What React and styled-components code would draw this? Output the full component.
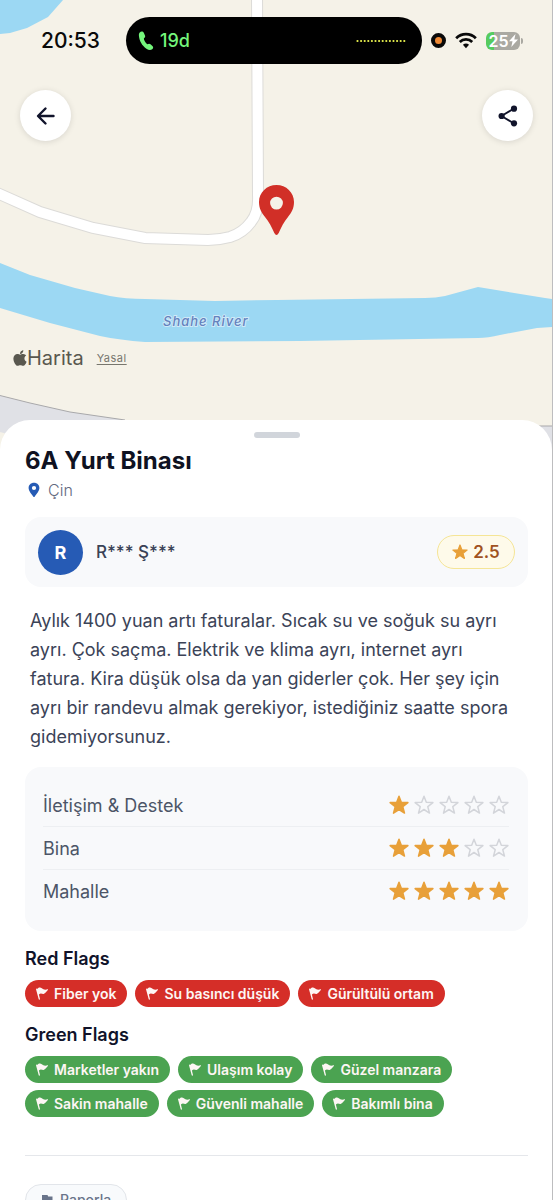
import React from 'react';
import styled, { createGlobalStyle } from 'styled-components';
import { FaApple } from 'react-icons/fa';

const GlobalStyle = createGlobalStyle`
  * { box-sizing: border-box; }
  body { margin: 0; background: #fff; }
  body, button { font-family: Inter, "Noto Sans", "Liberation Sans", sans-serif; }
  h1, h2, p, ul { margin: 0; padding: 0; }
`;

const Screen = styled.div`
  height: 100vh;
  overflow: hidden auto;
  scrollbar-width: none;
  border-right: 1px solid #bdbdbf;
  background: #fff;
`;

const Hero = styled.header`
  position: relative;
  height: 450px;
  display: flex;
  flex-direction: column;
  background: #f5f2e8;
`;

const MapArt = styled.svg`
  position: absolute;
  inset: 0;
  width: 100%;
  height: 100%;
`;

const RiverLabel = styled.text`
  font: italic 500 13px Inter, "Liberation Sans", sans-serif;
  letter-spacing: 1px;
  fill: #6482bd;
  stroke: #cfe9f8;
  stroke-width: 2px;
  paint-order: stroke;
`;

const StatusBar = styled.div`
  position: relative;
  display: flex;
  align-items: center;
  margin-top: 17px;
  padding: 0 29px 0 41px;
`;

const Clock = styled.time`
  width: 85px;
  font-size: 21px;
  line-height: 24px;
  font-weight: 500;
  color: #0a0a0a;
`;

const Island = styled.div`
  flex: 1;
  height: 47px;
  display: flex;
  align-items: center;
  gap: 6px;
  padding: 0 16px 0 12px;
  border-radius: 24px;
  background: #000;
`;

const CallTime = styled.span`
  flex: 1;
  font-size: 18px;
  line-height: 24px;
  font-weight: 500;
  color: #74f67c;
`;

const Indicators = styled.div`
  display: flex;
  align-items: center;
  gap: 9px;
  margin-left: 9px;
`;

const MicDot = styled.span`
  width: 15px;
  height: 15px;
  border: 4px solid #0a0a0a;
  border-radius: 50%;
  background: #f08a35;
`;

const Battery = styled.span`
  display: flex;
  align-items: center;
  gap: 1px;
`;

const BatteryBody = styled.span`
  display: flex;
  align-items: center;
  justify-content: center;
  width: 34px;
  height: 18px;
  border-radius: 6px;
  background: linear-gradient(90deg, #56cb5f 25%, #aaa9a2 25%);
  color: #fff;
  font-size: 16px;
  line-height: 18px;
  font-weight: 600;
`;

const BatteryCap = styled.span`
  width: 2px;
  height: 6px;
  border-radius: 0 2px 2px 0;
  background: #aaa9a2;
`;

const MapNav = styled.nav`
  position: relative;
  display: flex;
  justify-content: space-between;
  margin-top: 26px;
  padding: 0 19px 0 20px;
`;

const RoundButton = styled.button`
  display: grid;
  place-items: center;
  width: 51px;
  height: 51px;
  padding: 0;
  border: 0;
  border-radius: 50%;
  background: #fff;
  color: #11142b;
  box-shadow: 0 1px 6px rgba(0, 0, 0, 0.12);
`;

const Attribution = styled.div`
  position: relative;
  display: flex;
  align-items: center;
  margin-top: auto;
  padding: 0 11px 80px;
  color: #59584f;
`;

const MapBrand = styled.span`
  display: flex;
  align-items: center;
  font-size: 20px;
  line-height: 24px;
  svg { margin-right: -2px; }
`;

const LegalLink = styled.a`
  margin-left: 13px;
  font-size: 11px;
  line-height: 24px;
  letter-spacing: 0.5px;
  color: #77766d;
  text-underline-offset: 2px;
`;

const Sheet = styled.main`
  position: relative;
  margin-top: -30px;
  padding: 12px 24px 24px 25px;
  border-radius: 30px 30px 0 0;
  background: #fff;
`;

const Handle = styled.div`
  width: 46px;
  height: 6px;
  margin: 0 auto;
  border-radius: 3px;
  background: #d1d5db;
`;

const Title = styled.h1`
  margin-top: 7px;
  font-size: 24px;
  line-height: 32px;
  font-weight: 700;
  color: #0f1222;
`;

const Place = styled.p`
  display: flex;
  align-items: center;
  gap: 8px;
  margin-top: 1px;
  padding-left: 3px;
  font-size: 16px;
  line-height: 24px;
  font-weight: 300;
  color: #64697f;
`;

const Card = styled.section`
  border-radius: 16px;
  background: #f8f9fb;
`;

const AuthorCard = styled(Card)`
  display: flex;
  align-items: center;
  height: 70px;
  margin-top: 15px;
  padding: 0 13px;
`;

const Avatar = styled.span`
  display: grid;
  place-items: center;
  width: 45px;
  height: 45px;
  border-radius: 50%;
  background: #265bb5;
  color: #fff;
  font-size: 18px;
  font-weight: 700;
`;

const AuthorName = styled.span`
  flex: 1;
  margin-left: 13px;
  font-size: 17px;
  line-height: 24px;
  font-weight: 500;
  color: #3a4256;
`;

const Score = styled.span`
  display: flex;
  align-items: center;
  justify-content: center;
  gap: 5px;
  width: 78px;
  height: 34px;
  border: 1px solid #f5e596;
  border-radius: 17px;
  background: #fefaea;
  color: #a0521f;
  font-size: 17px;
  line-height: 24px;
  font-weight: 600;
`;

const Review = styled.p`
  margin-top: 19px;
  padding: 0 10px 0 5px;
  font-size: 18px;
  line-height: 29px;
  color: #3b4357;
`;

const Ratings = styled(Card)`
  margin-top: 16px;
  padding: 17px 19px 18px 18px;
`;

const RatingRow = styled.div`
  display: flex;
  align-items: center;
  justify-content: space-between;
  height: 43px;
  border-bottom: 1px solid #edeff2;
  font-size: 18px;
  color: #4c5567;
  &:last-child { border-bottom-color: transparent; }
`;

const Stars = styled.span`
  display: flex;
  gap: 5px;
`;

const FlagGroup = styled.section`
  margin-top: 16px;
`;

const FlagHeading = styled.h2`
  font-size: 18px;
  line-height: 24px;
  font-weight: 600;
  color: #10132a;
`;

const ChipList = styled.ul`
  display: flex;
  flex-wrap: wrap;
  gap: 7px 8px;
  margin-top: 9px;
  list-style: none;
`;

const Chip = styled.li`
  display: flex;
  align-items: center;
  gap: 6px;
  height: 27px;
  padding: 0 11px;
  border-radius: 14px;
  background: ${(p) => p.$color};
  color: #fdf6f4;
  font-size: 14px;
  line-height: 20px;
  font-weight: 600;
`;

const Footer = styled.footer`
  margin-top: 38px;
  padding-top: 28px;
  border-top: 1px solid #e5e7eb;
`;

const ReportButton = styled.button`
  display: flex;
  align-items: center;
  gap: 7px;
  height: 32px;
  padding: 0 15px;
  border: 1px solid #e2e5ea;
  border-radius: 16px;
  background: #f8fafc;
  color: #69748a;
  font-size: 14px;
  line-height: 20px;
  font-weight: 500;
`;

const ROAD = 'M257 -5 L258 195 Q259 212 251 222 Q243 233 230 237 Q219 240 208 240 L145 238 L93 228 L40 212 L-5 192';

function MapScene() {
  return (
    <MapArt viewBox="0 0 552 450" preserveAspectRatio="xMidYMin slice" aria-label="Harita">
      <path d="M0 0H63L48 17L27 28L10 33L0 34Z" fill="#9cd8f3" />
      <path d={ROAD} fill="none" stroke="#dcdbd8" strokeWidth="12" />
      <path d={ROAD} fill="none" stroke="#fff" strokeWidth="10" />
      <path
        d="M0 263L30 275L75 288L110 296Q125 299 145 299L215 301L277 300L425 298Q436 298 445 296L478 287L545 298L553 299V327L537 328L500 335Q488 338 478 338L300 341L145 342Q120 340 100 336L50 323L0 308Z"
        fill="#9cd8f3"
      />
      <path d="M-2 395L30 403L70 412L125 420V450H30L-2 432Z" fill="#e0e1e6" stroke="#a9a9ab" />
      <path d="M0 432L30 440V452H0Z" fill="#f5f2e8" />
      <path d="M530 426H560V455H530Z" fill="#e0e1e6" stroke="#a9a9ab" />
      <RiverLabel x="163" y="326">Shahe River</RiverLabel>
      <path
        fill="#d12f27"
        fillRule="evenodd"
        d="M276.500 185C266.800 185 259 192.500 259 202C259 208.500 261.500 212.500 265 217C269 222 272 227.500 274.300 233Q276.500 237 278.700 233C281 227.500 284 222 288 217C291.500 212.500 294 208.500 294 202C294 192.500 286.200 185 276.500 185ZM276.500 196.700A6.400 6.400 0 1 1 276.500 209.500A6.400 6.400 0 1 1 276.500 196.700Z"
      />
    </MapArt>
  );
}

const STAR = 'M10 1.200L12.300 7.200L18.900 7.600L13.800 11.700L15.500 18.100L10 14.500L4.500 18.100L6.200 11.700L1.100 7.600L7.700 7.200Z';

function Star({ filled, size = 20 }) {
  return (
    <svg width={size} height={size} viewBox="0 0 20 20" aria-hidden="true">
      <path
        d={STAR}
        fill={filled ? '#e8a039' : 'none'}
        stroke={filled ? '#e8a039' : '#d3d5da'}
        strokeWidth="1.500"
        strokeLinejoin="round"
      />
    </svg>
  );
}

function ChipFlag() {
  return (
    <svg width="12" height="13" viewBox="0 0 12 13" aria-hidden="true">
      <path
        fill="currentColor"
        d="M0 2.300C.1 1.500 1 1.200 1.500 1.900C2.500 .4 4.400 .2 5.800 1.300C7.400 2.800 9.200 3 11.800 2.300C12.300 2.200 12.300 2.700 11.900 3C10.600 4.200 9.700 5.900 8 6.700C6.300 7.400 5.100 5.700 2.900 7.400L4 12C4.100 12.700 2.900 12.900 2.700 12.200L.2 3.100Z"
      />
    </svg>
  );
}

function CallIcon() {
  return (
    <svg width="16" height="20" viewBox="0 0 16 20" aria-hidden="true">
      <path
        fill="#74f67c"
        d="M1.500 1.700C3 0 5 .2 5.800 1.800L7 4.500C7.500 5.600 7 6.400 5.900 7.300C5.600 8.800 7.500 12 9.300 13.200C10.800 12.500 11.600 12.500 12.500 13.300L14.400 15C15.500 16 15.400 17.200 14.200 18.200C12.600 19.500 10.600 19.200 8.400 17.700C4 14.700 1.400 9.700 1 5.500C.8 3.600 .9 2.500 1.500 1.700Z"
      />
    </svg>
  );
}

function WifiIcon() {
  return (
    <svg width="22" height="17" viewBox="0 0 23 17" aria-hidden="true">
      <g fill="none" stroke="#0a0a0a" strokeWidth="2.900">
        <path d="M1.200 6.100C7 .5 16 .5 21.800 6.100" />
        <path d="M5 10C8.600 6.500 14.400 6.500 18 10" />
      </g>
      <path d="M8.300 12.900Q11.500 10.300 14.700 12.900L11.500 16.500Z" fill="#0a0a0a" />
    </svg>
  );
}

const ratings = [
  ['İletişim & Destek', 1],
  ['Bina', 3],
  ['Mahalle', 5],
];

const flagGroups = [
  { title: 'Red Flags', color: '#d52e28', items: ['Fiber yok', 'Su basıncı düşük', 'Gürültülü ortam'] },
  {
    title: 'Green Flags',
    color: '#4ba351',
    items: ['Marketler yakın', 'Ulaşım kolay', 'Güzel manzara', 'Sakin mahalle', 'Güvenli mahalle', 'Bakımlı bina'],
  },
];

export default function App() {
  return (
    <Screen lang="tr">
      <GlobalStyle />
      <Hero>
        <MapScene />
        <StatusBar>
          <Clock>20:53</Clock>
          <Island>
            <CallIcon />
            <CallTime>19d</CallTime>
            <svg width="50" height="4" viewBox="0 0 50 4" aria-hidden="true">
              <path d="M1.500 2H50" stroke="#e9f24e" strokeWidth="2.200" strokeLinecap="round" strokeDasharray="0 3.600" />
            </svg>
          </Island>
          <Indicators>
            <MicDot />
            <WifiIcon />
            <Battery>
              <BatteryBody>
                25
                <svg width="9" height="13" viewBox="0 0 9 13" aria-hidden="true">
                  <path d="M6.500 0L0 7.300H3.500L2.300 13L9 5.500H5.300Z" fill="#fff" />
                </svg>
              </BatteryBody>
              <BatteryCap />
            </Battery>
          </Indicators>
        </StatusBar>
        <MapNav>
          <RoundButton type="button" aria-label="Geri">
            <svg width="20" height="20" viewBox="0 0 20 20" fill="none" stroke="currentColor" strokeWidth="2.400" strokeLinecap="round" strokeLinejoin="round">
              <path d="M17.500 10H2.500M9.500 2.500L2 10L9.500 17.500" />
            </svg>
          </RoundButton>
          <RoundButton type="button" aria-label="Paylaş">
            <svg width="20" height="22" viewBox="0 0 20 22" fill="currentColor">
              <path d="M16 3.500L3.500 11L16 18.500" fill="none" stroke="currentColor" strokeWidth="1.800" />
              <circle cx="16" cy="3.700" r="3.100" />
              <circle cx="3.600" cy="11" r="3.100" />
              <circle cx="16" cy="18.300" r="3.100" />
            </svg>
          </RoundButton>
        </MapNav>
        <Attribution>
          <MapBrand>
            <FaApple size={18} aria-hidden="true" />
            Harita
          </MapBrand>
          <LegalLink href="#yasal">Yasal</LegalLink>
        </Attribution>
      </Hero>

      <Sheet>
        <Handle />
        <Title>6A Yurt Binası</Title>
        <Place>
          <svg width="12" height="16" viewBox="0 0 12 16" aria-hidden="true">
            <path
              fill="#265bb5"
              fillRule="evenodd"
              d="M6 .8C2.900 .8 .6 3 .6 6C.6 8.900 3.500 12.200 5.200 14.500Q6 15.600 6.800 14.500C8.500 12.200 11.400 8.900 11.400 6C11.400 3 9.100 .8 6 .8ZM6 3.900A2.100 2.100 0 1 1 6 8.100A2.100 2.100 0 1 1 6 3.900Z"
            />
          </svg>
          Çin
        </Place>

        <AuthorCard>
          <Avatar>R</Avatar>
          <AuthorName>R*** Ş***</AuthorName>
          <Score>
            <Star filled size={16} />
            2.5
          </Score>
        </AuthorCard>

        <Review>
          Aylık 1400 yuan artı faturalar. Sıcak su ve soğuk su ayrı ayrı. Çok saçma. Elektrik ve klima ayrı, internet
          ayrı fatura. Kira düşük olsa da yan giderler çok. Her şey için ayrı bir randevu almak gerekiyor, istediğiniz
          saatte spora gidemiyorsunuz.
        </Review>

        <Ratings>
          {ratings.map(([label, value]) => (
            <RatingRow key={label}>
              <span>{label}</span>
              <Stars role="img" aria-label={`${value} / 5`}>
                {[1, 2, 3, 4, 5].map((n) => (
                  <Star key={n} filled={n <= value} />
                ))}
              </Stars>
            </RatingRow>
          ))}
        </Ratings>

        {flagGroups.map((group) => (
          <FlagGroup key={group.title}>
            <FlagHeading>{group.title}</FlagHeading>
            <ChipList>
              {group.items.map((item) => (
                <Chip key={item} $color={group.color}>
                  <ChipFlag />
                  {item}
                </Chip>
              ))}
            </ChipList>
          </FlagGroup>
        ))}

        <Footer>
          <ReportButton type="button">
            <svg width="12" height="14" viewBox="0 0 12 14" aria-hidden="true">
              <path d="M1 2H6.500L7.200 3.400H11.500V10H7L6.300 8.700H2.500V13.500H1Z" fill="currentColor" />
            </svg>
            Raporla
          </ReportButton>
        </Footer>
      </Sheet>
    </Screen>
  );
}
